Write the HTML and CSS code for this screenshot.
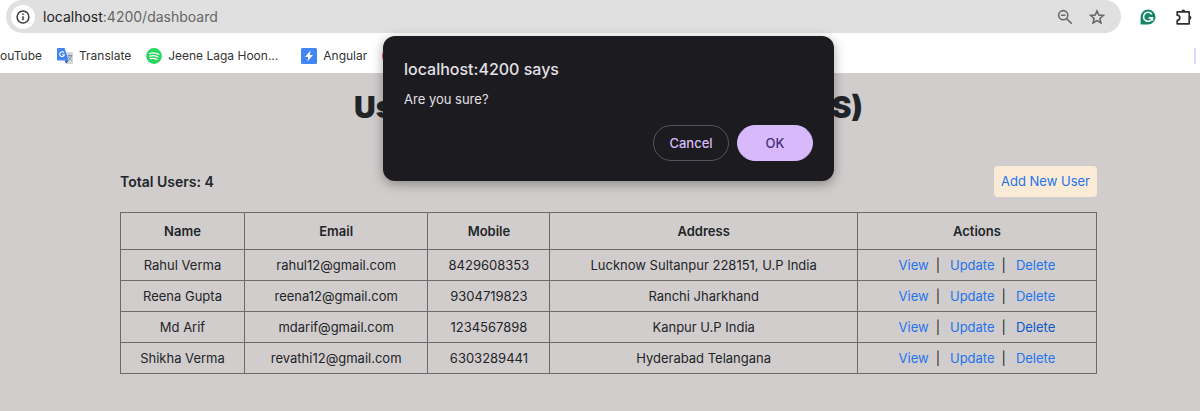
FILE: index.html
```html
<!DOCTYPE html>
<html lang="en">
<head>
<meta charset="utf-8">
<title>Dashboard</title>
<link rel="stylesheet" href="styles.css">
</head>
<body>
<header class="toolbar">
  <div class="omnibox">
    <button class="site-info" aria-label="Site information">
      <svg width="14" height="14" viewBox="0 0 14 14" fill="none" stroke="#3c3c3c" stroke-width="1.5"><circle cx="7" cy="7" r="5.9"/><path d="M7 6.2v4M7 3.6v1.5"/></svg>
    </button>
    <div class="url"><span class="host">localhost</span>:4200/dashboard</div>
    <button class="icon-button" aria-label="Zoom">
      <svg width="16" height="16" viewBox="0 0 16 16" fill="none" stroke="#6b6b6b" stroke-width="1.6"><circle cx="6.2" cy="6.2" r="4.6"/><path d="M9.6 9.6l5.2 5.2M4 6.2h4.4"/></svg>
    </button>
    <button class="icon-button" aria-label="Bookmark this page">
      <svg width="16" height="16" viewBox="0 0 16 16" fill="none" stroke="#666" stroke-width="1.6"><path d="M8 2l1.8 4.1 4.4.4-3.3 3 1 4.4L8 11.6l-3.9 2.3 1-4.4-3.3-3 4.4-.4z"/></svg>
    </button>
  </div>
  <button class="icon-button" aria-label="Writing assistant">
    <svg width="16" height="16" viewBox="0 0 16 16"><path d="M8 .5A7.5 7.5 0 1 1 8 15.5H.6V8A7.5 7.5 0 0 1 8 .5z" fill="#138768"/><path d="M11.8 5.3A4.5 4.5 0 1 0 12.4 8.9H8.6M12.4 8.7v3" fill="none" stroke="#fff" stroke-width="1.6"/></svg>
  </button>
  <button class="icon-button" aria-label="Extensions">
    <svg width="18" height="18" viewBox="0 0 18 18"><path d="M2.2 3.8h12v12h-12v-3.4a2.6 2.6 0 0 0 0-5.2z" fill="none" stroke="#303030" stroke-width="1.7" stroke-linejoin="round"/><path d="M6.3 3.5a2 2 0 0 1 4 0zM14.4 7.8a2 2 0 0 1 0 4z" fill="#303030"/></svg>
  </button>
</header>
<nav class="bookmarks" aria-label="Bookmarks">
  <a class="bookmark" href="#">ouTube</a>
  <a class="bookmark" href="#">
    <svg width="16" height="16" viewBox="0 0 16 16"><path d="M6 4h9a1 1 0 0 1 1 1v10a1 1 0 0 1-1 1H9z" fill="#d3d7dc"/><path d="M1 0h6.6l3.9 12.5H1a1 1 0 0 1-1-1V1a1 1 0 0 1 1-1z" fill="#4384ee"/><path d="M7.8 12.5h3.7L9 15.8z" fill="#2855b8"/><path d="M7 4.7A2.4 2.4 0 1 0 7.4 6.7H5.2" fill="none" stroke="#fff" stroke-width="1.1"/><path d="M10.5 7.7h4.8M12.8 6.6v1.1M14.4 7.7c-.4 2-1.5 3.3-3 4.3M11.3 8.8c.6 1.5 1.7 2.6 3.3 3.6" fill="none" stroke="#708ca8"/></svg>Translate</a>
  <a class="bookmark" href="#">
    <svg width="16" height="16" viewBox="0 0 16 16"><circle cx="8" cy="8" r="7.9" fill="#2bd463"/><path d="M3.4 5.5c3.1-.9 6.6-.6 9.3.9M3.8 8.2c2.7-.8 5.7-.5 8.1.8M4.2 10.7c2.3-.6 4.8-.4 6.8.8" fill="none" stroke="#fff" stroke-width="1.3" stroke-linecap="round"/></svg>Jeene Laga Hoon...</a>
  <a class="bookmark spaced" href="#">
    <svg width="16" height="16" viewBox="0 0 16 16"><rect width="16" height="16" rx="1.5" fill="#4285f4"/><path d="M9.5 2.5L4 9h3.2l-.8 4.6L12 7H8.8z" fill="#fff"/></svg>Angular</a>
  <a class="bookmark" href="#" aria-label="Bookmark">
    <svg width="16" height="16" viewBox="0 0 16 16"><circle cx="8" cy="8" r="8" fill="#f05a48"/></svg></a>
  <span class="bookmark-divider"></span>
</nav>
<main class="page">
  <h1 class="title"><span>Us</span><span>S)</span></h1>
  <div class="summary">
    <h2 class="total">Total Users: 4</h2>
    <a class="add-user" href="#">Add New User</a>
  </div>
  <table class="users">
    <thead>
      <tr><th class="col-name">Name</th><th class="col-email">Email</th><th class="col-mobile">Mobile</th><th class="col-address">Address</th><th>Actions</th></tr>
    </thead>
    <tbody>
      <tr><td>Rahul Verma</td><td>rahul12@gmail.com</td><td>8429608353</td><td>Lucknow Sultanpur 228151, U.P India</td><td><div class="actions"><a href="#">View</a><span>|</span><a href="#">Update</a><span>|</span><a href="#">Delete</a></div></td></tr>
      <tr><td>Reena Gupta</td><td>reena12@gmail.com</td><td>9304719823</td><td>Ranchi Jharkhand</td><td><div class="actions"><a href="#">View</a><span>|</span><a href="#">Update</a><span>|</span><a href="#">Delete</a></div></td></tr>
      <tr><td>Md Arif</td><td>mdarif@gmail.com</td><td>1234567898</td><td>Kanpur U.P India</td><td><div class="actions"><a href="#">View</a><span>|</span><a href="#">Update</a><span>|</span><a class="active" href="#">Delete</a></div></td></tr>
      <tr><td>Shikha Verma</td><td>revathi12@gmail.com</td><td>6303289441</td><td>Hyderabad Telangana</td><td><div class="actions"><a href="#">View</a><span>|</span><a href="#">Update</a><span>|</span><a href="#">Delete</a></div></td></tr>
    </tbody>
  </table>
</main>
<div class="dialog" role="alertdialog" aria-labelledby="dialog-title" aria-describedby="dialog-text">
  <h2 class="dialog-title" id="dialog-title">localhost:4200 says</h2>
  <p class="dialog-text" id="dialog-text">Are you sure?</p>
  <div class="dialog-buttons">
    <button class="button">Cancel</button>
    <button class="button primary">OK</button>
  </div>
</div>
</body>
</html>
```
FILE: styles.css
```css
* { box-sizing: border-box; }
body {
  margin: 0;
  min-height: 100vh;
  display: flex;
  flex-direction: column;
  position: relative;
  overflow-x: hidden;
  background: #fff;
  color: #212529;
  font: 13px/20px Inter, "Liberation Sans", sans-serif;
}
a { color: #2473ee; text-decoration: none; }
button { font: inherit; border: 0; padding: 0; background: none; }
svg { display: block; flex: none; }

.toolbar { display: flex; align-items: center; gap: 19px; padding: 0 7px 0 6px; height: 33px; }
.omnibox {
  flex: 1;
  display: flex;
  align-items: center;
  gap: 16px;
  height: 33px;
  padding: 0 16px 0 5px;
  border-radius: 17px;
  background: #e0e0e0;
}
.site-info {
  display: grid;
  place-items: center;
  width: 24px;
  height: 24px;
  border-radius: 50%;
  background: #fff;
}
.url { flex: 1; margin-left: -8px; font-size: 14px; color: #666; }
.host { color: #222; }

.bookmarks { display: flex; align-items: center; gap: 15px; height: 40px; padding: 6px 4px 0 0; overflow: hidden; }
.bookmark { display: flex; align-items: center; gap: 6px; color: #333; font-size: 12px; white-space: nowrap; }
.spaced { margin-left: 8px; }
.bookmark-divider { margin-left: auto; width: 2px; height: 16px; background: #e6d8fb; }

.page { flex: 1; padding: 16px 103px 32px 120px; background: #d1cdcc; }
.title {
  display: flex;
  justify-content: space-between;
  max-width: 509px;
  margin: 0 auto;
  font: 900 30px/36px Inter, sans-serif;
}
.summary { display: flex; align-items: center; justify-content: space-between; margin: 41px 0 15px; }
.total { margin: 0; font-size: 14px; font-weight: 600; }
.add-user { padding: 6px 7px; border-radius: 4px; background: #faebd7; line-height: 19px; }

.users { width: 100%; table-layout: fixed; border-collapse: collapse; text-align: center; }
.users th, .users td { border: 1px solid #6b6969; padding: 5px 4px; }
.users th { padding: 8px 4px; font-weight: 600; }
.col-name { width: 12.7%; }
.col-email { width: 18.8%; }
.col-mobile { width: 12.5%; }
.col-address { width: 31.5%; }
.actions { display: flex; justify-content: center; gap: 7px; }
.actions span { margin-right: 3px; }
.actions .active { color: #0a58ca; }

.dialog {
  position: absolute;
  top: 36px;
  left: calc(50% - 217px);
  width: 451px;
  padding: 23px 21px 20px;
  border-radius: 12px;
  background: #1c1b20;
  color: #e3e0e6;
  box-shadow: 0 3px 12px rgba(0, 0, 0, 0.35);
}
.dialog-title { margin: 0; font-size: 16px; font-weight: 500; }
.dialog-text { margin: 10px 0 16px; }
.dialog-buttons { display: flex; justify-content: flex-end; gap: 8px; }
.button {
  width: 76px;
  height: 36px;
  border: 1px solid #5a5261;
  border-radius: 18px;
  color: #d7bcfa;
  font-weight: 500;
}
.primary { border-color: #d7b9fc; background: #d7b9fc; color: #492c79; }
```
